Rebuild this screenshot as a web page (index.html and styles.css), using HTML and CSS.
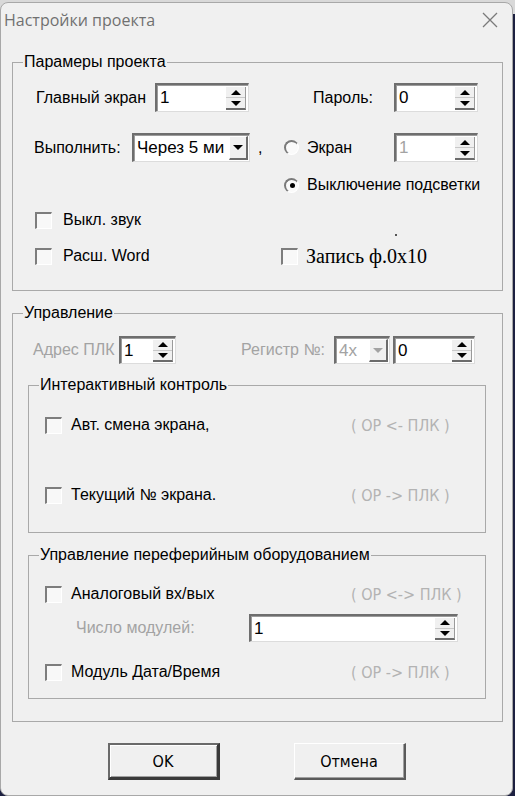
FILE: index.html
```html
<!DOCTYPE html>
<html lang="ru">
<head>
<meta charset="utf-8">
<title>Настройки проекта</title>
<link rel="stylesheet" href="styles.css">
</head>
<body>
<div class="window">
  <div class="titlebar">
    <span class="title">Настройки проекта</span>
    <svg class="close" width="16" height="16" viewBox="0 0 16 16"><path d="M1 1L15 15M15 1L1 15" stroke="#7a7a7a" stroke-width="1.3" fill="none"/></svg>
  </div>
  <div class="content">
    <fieldset class="group g1">
      <legend>Парамеры проекта</legend>
      <div class="inner1">
        <div class="row r1">
          <span class="lbl l-main">Главный экран</span>
          <div class="spin w94"><span class="val">1</span><span class="arrows"><i class="up"></i><i class="down"></i></span></div>
          <span class="lbl l-pass">Пароль:</span>
          <div class="spin w84"><span class="val">0</span><span class="arrows"><i class="up"></i><i class="down"></i></span></div>
        </div>
        <div class="row r2">
          <span class="lbl l-run">Выполнить:</span>
          <div class="combo w118"><span class="val">Через 5 ми</span><span class="drop"><i class="down"></i></span></div>
          <span class="lbl l-comma">,</span>
          <span class="radio-item w110"><span class="radio"></span><span class="lbl">Экран</span></span>
          <div class="spin w84 disabled"><span class="val">1</span><span class="arrows"><i class="up"></i><i class="down"></i></span></div>
        </div>
        <div class="row r3">
          <span class="radio-item"><span class="radio checked"></span><span class="lbl">Выключение подсветки</span></span>
        </div>
        <div class="row r4">
          <span class="check-item"><span class="cb"></span><span class="lbl">Выкл. звук</span></span>
          <span class="dot"></span>
        </div>
        <div class="row r5">
          <span class="check-item w246"><span class="cb"></span><span class="lbl">Расш. Word</span></span>
          <span class="check-item"><span class="cb cb-serif"></span><span class="lbl serif">Запись ф.0х10</span></span>
        </div>
      </div>
    </fieldset>

    <fieldset class="group g2">
      <legend>Управление</legend>
      <div class="inner2">
        <div class="row r-addr">
          <span class="lbl gray l-addr">Адрес ПЛК</span>
          <div class="spin w57"><span class="val">1</span><span class="arrows"><i class="up"></i><i class="down"></i></span></div>
          <span class="lbl gray l-reg">Регистр №:</span>
          <div class="combo w56 disabled"><span class="val">4x</span><span class="drop"><i class="down"></i></span></div>
          <div class="spin w82 sp-reg"><span class="val">0</span><span class="arrows"><i class="up"></i><i class="down"></i></span></div>
        </div>

        <fieldset class="group sub s1">
          <legend>Интерактивный контроль</legend>
          <div class="inner-s1">
            <div class="row srow">
              <span class="check-item w306"><span class="cb"></span><span class="lbl">Авт. смена экрана,</span></span>
              <span class="dir">( OP &lt;- ПЛК )</span>
            </div>
            <div class="row srow srow2">
              <span class="check-item w306"><span class="cb"></span><span class="lbl">Текущий № экрана.</span></span>
              <span class="dir">( OP -&gt; ПЛК )</span>
            </div>
          </div>
        </fieldset>

        <fieldset class="group sub s2">
          <legend>Управление переферийным оборудованием</legend>
          <div class="inner-s2">
            <div class="row srow">
              <span class="check-item w306"><span class="cb"></span><span class="lbl">Аналоговый вх/вых</span></span>
              <span class="dir">( OP &lt;-&gt; ПЛК )</span>
            </div>
            <div class="row r-mod">
              <span class="lbl gray l-mod">Число модулей:</span>
              <div class="spin w209"><span class="val">1</span><span class="arrows"><i class="up"></i><i class="down"></i></span></div>
            </div>
            <div class="row srow r-date">
              <span class="check-item w306"><span class="cb"></span><span class="lbl">Модуль Дата/Время</span></span>
              <span class="dir">( OP -&gt; ПЛК )</span>
            </div>
          </div>
        </fieldset>
      </div>
    </fieldset>

    <div class="buttons">
      <button class="btn default">OK</button>
      <button class="btn">Отмена</button>
    </div>
  </div>
</div>
</body>
</html>
```

FILE: styles.css
```css
html, body {
  margin: 0;
  padding: 0;
}
body {
  width: 515px;
  height: 796px;
  overflow: hidden;
  background: linear-gradient(#d9d9d9 0, #d9d9d9 14px, #1d2040 14px);
  font-family: "Liberation Sans", Arial, sans-serif;
  font-size: 16px;
  color: #000;
}
.window {
  box-sizing: border-box;
  width: 513px;
  height: 794px;
  margin-top: 2px;
  background: #f0f0f0;
  border: 1px solid #a8a8a8;
  border-radius: 8px;
  overflow: hidden;
}
.titlebar {
  height: 34px;
  display: flex;
  align-items: center;
  justify-content: space-between;
  padding: 0 14px 0 3px;
}
.title {
  font-family: "Open Sans", "Noto Sans", sans-serif;
  font-size: 16px;
  color: #707070;
}
.close { display: block; }
.content {
  padding: 16px 0 0 11px;
}

/* group boxes */
.group {
  margin: 0;
  padding: 0;
  border: 1px solid #a9a9a9;
  box-sizing: border-box;
  min-width: 0;
}
.group > legend {
  margin-left: 10px;
  padding: 0 1px;
  line-height: 18px;
  font-size: 16px;
}
.g1 { width: 491px; }
.g2 { width: 491px; margin-top: 13px; }

.inner1 { padding: 12px 0 24px 21px; }
.row { display: flex; align-items: center; }
.lbl { white-space: nowrap; }
.gray { color: #a3a3a3; }

.r1, .r2 { height: 29px; }
.r2 { margin-top: 21px; }
.r3 { height: 20px; margin-top: 13px; padding-left: 250px; }
.r4 { height: 20px; margin-top: 15px; padding-left: 1px; }
.r5 { height: 20px; margin-top: 16px; padding-left: 1px; }

.l-main { width: 119px; padding-left: 2px; }
.l-pass { width: 124px; padding-right: 21px; text-align: right; }
.l-run { width: 98px; }
.l-comma { width: 34px; padding-left: 8px; box-sizing: border-box; }
.w110 { width: 110px; }
.w246 { width: 246px; }
.w306 { width: 306px; }

.dot {
  width: 2px; height: 2px; background: #555;
  margin-left: 254px; margin-top: 30px;
}

/* spin edit */
.spin, .combo {
  box-sizing: border-box;
  height: 29px;
  display: flex;
  background: #fff;
  border-style: solid;
  border-width: 2px 1px 1px 2px;
  border-color: #6e6e6e #dcdcdc #dcdcdc #6e6e6e;
  box-shadow: inset 1px 1px 0 #9c9c9c;
  flex: none;
}
.val {
  flex: 1;
  padding: 2px 0 0 3px;
  font-size: 17px;
  line-height: 22px;
  overflow: hidden;
  white-space: nowrap;
}
.disabled .val { color: #a3a3a3; }
.w94 { width: 94px; }
.w84 { width: 84px; }
.w118 { width: 118px; }
.w57 { width: 57px; }
.w56 { width: 56px; }
.w82 { width: 82px; }
.w209 { width: 209px; }

.arrows {
  width: 19px;
  margin: 2px 2px 1px 0;
  display: flex;
  flex-direction: column;
  background: #f0f0f0;
  border-bottom: 2px solid #6b6b6b;
  border-right: 1px solid #9a9a9a;
}
.arrows i {
  flex: 1;
  display: flex;
  align-items: center;
  justify-content: center;
}
.arrows i.up { border-bottom: 1px solid #c8c8c8; }
.arrows i::before {
  content: "";
  width: 0; height: 0;
  border-left: 5px solid transparent;
  border-right: 5px solid transparent;
}
.arrows i.up::before { border-bottom: 5px solid #000; }
.arrows i.down::before { border-top: 5px solid #000; }

.drop {
  width: 19px;
  margin: 1px 1px 1px 0;
  display: flex;
  align-items: center;
  justify-content: center;
  background: #f0f0f0;
  border-style: solid;
  border-width: 1px 2px 2px 1px;
  border-color: #fff #6b6b6b #6b6b6b #fff;
  box-sizing: border-box;
}
.drop i::before {
  content: "";
  display: block;
  width: 0; height: 0;
  border-left: 5px solid transparent;
  border-right: 5px solid transparent;
  border-top: 5px solid #000;
}
.combo.disabled .drop i::before { border-top-color: #a3a3a3; }

/* radio and checkbox */
.radio-item, .check-item { display: flex; align-items: center; }
.radio {
  box-sizing: border-box;
  width: 15px; height: 15px;
  border-radius: 50%;
  border-style: solid;
  border-width: 2px 1px 1px 2px;
  border-color: #7a7a7a #fff #fff #7a7a7a;
  background: #fafafa;
  margin-right: 8px;
  display: flex;
  align-items: center;
  justify-content: center;
  flex: none;
}
.radio.checked::after {
  content: "";
  width: 5px; height: 5px;
  border-radius: 50%;
  background: #000;
}
.cb {
  box-sizing: border-box;
  width: 17px; height: 17px;
  border-style: solid;
  border-width: 2px 1px 1px 2px;
  border-color: #7d7d7d #fff #fff #7d7d7d;
  background: #f8f8f8;
  margin-right: 11px;
  flex: none;
}
.cb-serif { margin-right: 8px; }
.serif {
  font-family: "Liberation Serif", "Times New Roman", serif;
  font-size: 20px;
}

/* group 2 */
.inner2 { padding: 14px 0 22px 0; }
.r-addr { height: 28px; padding-left: 20px; }
.r-addr .spin, .r-addr .combo { height: 28px; }
.l-addr { width: 86px; }
.l-reg { width: 149px; padding-right: 9px; text-align: right; }
.sp-reg { margin-left: 3px; }

.sub {
  margin: 12px 16px 0 15px;
  width: auto;
}
.s2 { margin-top: 13px; }
.inner-s1 { padding: 21px 0 27px 16px; }
.inner-s2 { padding: 20px 0 16px 16px; }
.srow { height: 20px; }
.srow2 { margin-top: 50px; }
.srow .cb { margin-right: 9px; }
.dir {
  font-family: "DejaVu Sans Condensed", "DejaVu Sans", sans-serif;
  font-stretch: condensed;
  font-size: 16px;
  color: #b3b3b3;
  white-space: nowrap;
}
.r-mod { height: 28px; margin-top: 10px; }
.r-mod .spin { height: 28px; }
.l-mod { width: 204px; padding-left: 31px; box-sizing: border-box; }
.r-date { margin-top: 20px; }

/* buttons */
.buttons {
  display: flex;
  justify-content: center;
  gap: 74px;
  margin-top: 21px;
  padding-right: 11px;
}
.btn {
  box-sizing: border-box;
  width: 112px;
  height: 37px;
  background: #f0f0f0;
  border-style: solid;
  border-width: 1px 2px 2px 1px;
  border-color: #fff #5a5a5a #5a5a5a #fff;
  box-shadow: inset -1px -1px 0 #a0a0a0;
  font-family: "DejaVu Sans Condensed", "DejaVu Sans", sans-serif;
  font-stretch: condensed;
  font-size: 16px;
  color: #000;
  padding: 0;
}
.btn.default {
  border-width: 2px 3px 3px 2px;
  border-color: #6a6a6a #3a3a3a #3a3a3a #6a6a6a;
  box-shadow: inset 1px 1px 0 #fff, inset -1px -1px 0 #a0a0a0;
}
```
